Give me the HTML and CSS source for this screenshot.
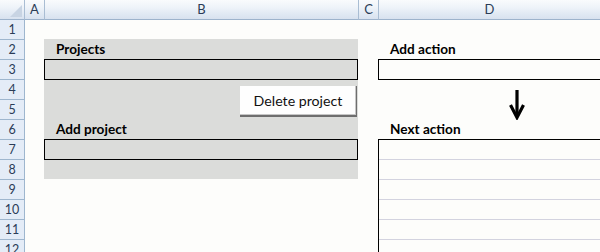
FILE: index.html
```html
<!DOCTYPE html>
<html>
<head>
<meta charset="utf-8">
<link rel="stylesheet" href="styles.css">
</head>
<body>
<div class="sheet">
  <div class="corner"><span class="tri"></span></div>
  <div class="colhead">A</div>
  <div class="colhead">B</div>
  <div class="colhead">C</div>
  <div class="colhead last">D</div>

  <div class="rowhead r1">1</div>
  <div class="rowhead r2">2</div>
  <div class="rowhead r3">3</div>
  <div class="rowhead r4">4</div>
  <div class="rowhead r5">5</div>
  <div class="rowhead r6">6</div>
  <div class="rowhead r7">7</div>
  <div class="rowhead r8">8</div>
  <div class="rowhead r9">9</div>
  <div class="rowhead r10">10</div>
  <div class="rowhead r11">11</div>
  <div class="rowhead r12">12</div>

  <div class="panel">
    <div class="label">Projects</div>
    <div class="input"></div>
    <div class="btn-row"><div class="btn">Delete project</div></div>
    <div class="label short">Add project</div>
    <div class="input"></div>
  </div>

  <div class="actions">
    <div class="label">Add action</div>
    <div class="input open"></div>
    <div class="arrow-row">
      <svg class="arrow" width="20" height="32" viewBox="0 0 20 32">
        <path d="M10 2 V29" stroke="#000" stroke-width="3.2" fill="none"/>
        <path d="M3.5 17 L10 29.5 L16.5 17" stroke="#000" stroke-width="3.2" fill="none" stroke-linejoin="miter"/>
      </svg>
    </div>
    <div class="label short">Next action</div>
    <div class="list"></div>
  </div>
</div>
</body>
</html>
```

FILE: styles.css
```css
html, body {
  margin: 0;
  padding: 0;
  background: #fdfdfb;
  overflow: hidden;
}
body {
  width: 600px;
  height: 252px;
  font-family: Lato, "Open Sans", sans-serif;
}
.sheet {
  display: grid;
  grid-template-columns: 25px 20px 314px 20px 221px;
  grid-template-rows: repeat(13, 20px);
}
.corner, .colhead {
  box-sizing: border-box;
  height: 20px;
  background: linear-gradient(#f9fbfd 0%, #eef3f9 40%, #e2eaf4 70%, #d8e2ef 100%);
  border-bottom: 1px solid #9db3cc;
  border-right: 1px solid #a9bdd3;
  font-size: 13px;
  line-height: 19px;
  text-align: center;
  color: #2b3c57;
}
.colhead.last {
  border-right: none;
}
.corner {
  position: relative;
}
.tri {
  position: absolute;
  right: 2px;
  bottom: 2px;
  width: 0;
  height: 0;
  border-left: 12px solid transparent;
  border-bottom: 12px solid #c8d4e3;
}
.rowhead {
  grid-column: 1;
  box-sizing: border-box;
  height: 20px;
  background: #e4ecf7;
  border-bottom: 1px solid #9eb6ce;
  border-right: 1px solid #9eb6ce;
  font-size: 12.5px;
  line-height: 19px;
  text-align: center;
  color: #2b3c57;
}
.panel {
  grid-column: 3;
  grid-row: 3 / span 7;
  align-self: start;
  margin: -1px 0 0 -1px;
  width: 314px;
  height: 140px;
  background: #dbdcda;
  display: flex;
  flex-direction: column;
}
.label {
  height: 20px;
  line-height: 20px;
  padding-left: 12px;
  font-size: 13.6px;
  font-weight: bold;
  color: #000;
}
.label.short {
  height: 19px;
  line-height: 19px;
}
.input {
  box-sizing: border-box;
  height: 21px;
  border: 1px solid #000;
}
.btn-row {
  height: 40px;
  display: flex;
  justify-content: flex-end;
  align-items: flex-start;
}
.btn {
  box-sizing: border-box;
  margin-top: 6px;
  margin-right: 1px;
  width: 117px;
  height: 31px;
  background: #fefefe;
  border-right: 1px solid #6e6e6e;
  border-bottom: 2px solid #6e6e6e;
  box-shadow: inset -1px -1px 0 #c6c6c6;
  font-size: 14.2px;
  line-height: 29px;
  text-align: center;
  color: #111;
}
.actions {
  grid-column: 5;
  grid-row: 3 / span 11;
  align-self: start;
  margin: -1px 0 0 -1px;
  width: 222px;
  display: flex;
  flex-direction: column;
}
.input.open {
  border-right: none;
}
.arrow-row {
  height: 40px;
  display: flex;
  justify-content: flex-start;
  padding-left: 129px;
}
.arrow {
  margin-top: 8px;
}
.list {
  box-sizing: border-box;
  height: 120px;
  border-top: 1px solid #000;
  border-left: 1px solid #000;
  background: repeating-linear-gradient(to bottom, transparent 0, transparent 19px, #d3d3df 19px, #d3d3df 20px);
}
```
